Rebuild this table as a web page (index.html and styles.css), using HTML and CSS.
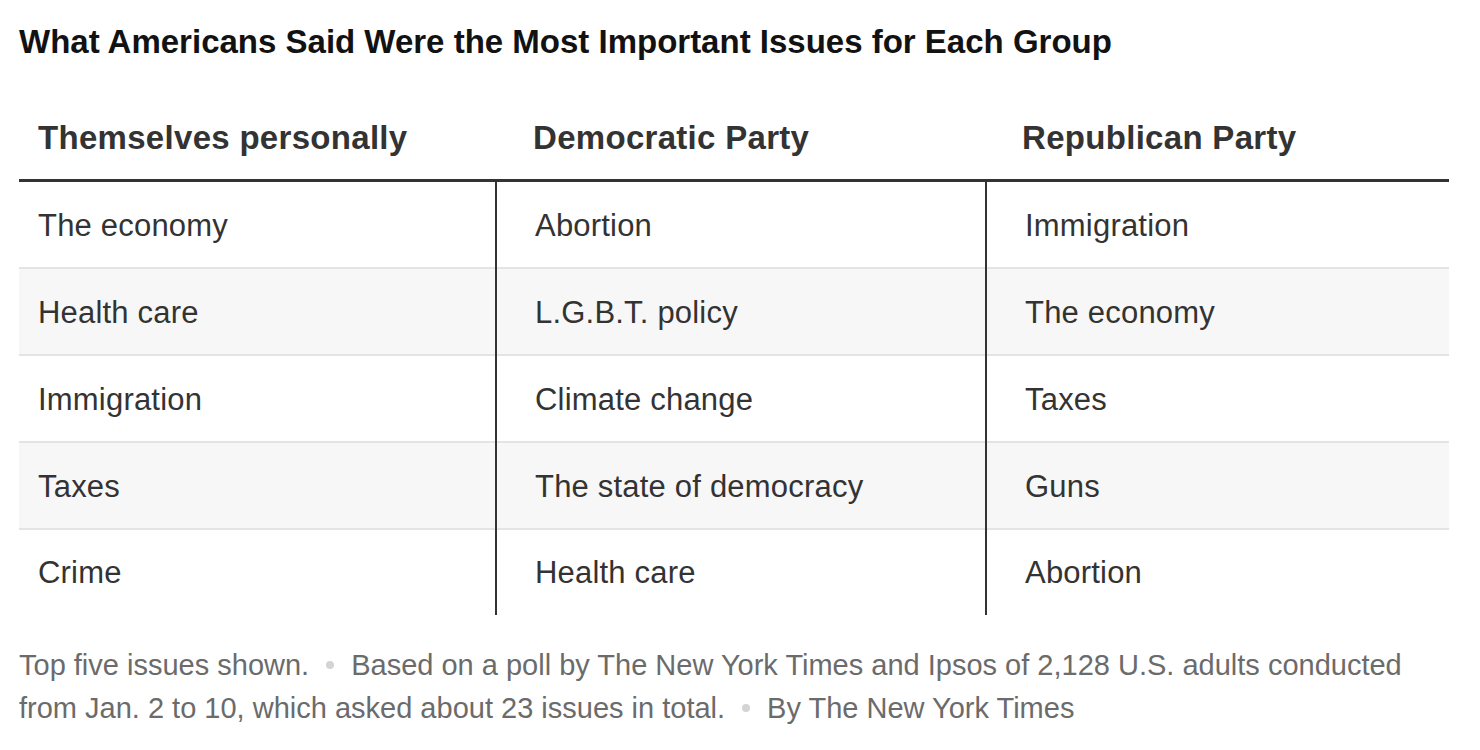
FILE: index.html
```html
<!DOCTYPE html>
<html lang="en">
<head>
<meta charset="utf-8">
<title>What Americans Said Were the Most Important Issues for Each Group</title>
<link rel="stylesheet" href="styles.css">
</head>
<body>
<div class="graphic">
  <h1 class="title">What Americans Said Were the Most Important Issues for Each Group</h1>
  <div class="table">
    <div class="thead">
      <div class="th c1">Themselves personally</div>
      <div class="th c2">Democratic Party</div>
      <div class="th c3">Republican Party</div>
    </div>
    <div class="tbody">
      <div class="row">
        <div class="td c1">The economy</div>
        <div class="td c2">Abortion</div>
        <div class="td c3">Immigration</div>
      </div>
      <div class="row alt">
        <div class="td c1">Health care</div>
        <div class="td c2">L.G.B.T. policy</div>
        <div class="td c3">The economy</div>
      </div>
      <div class="row">
        <div class="td c1">Immigration</div>
        <div class="td c2">Climate change</div>
        <div class="td c3">Taxes</div>
      </div>
      <div class="row alt">
        <div class="td c1">Taxes</div>
        <div class="td c2">The state of democracy</div>
        <div class="td c3">Guns</div>
      </div>
      <div class="row last">
        <div class="td c1">Crime</div>
        <div class="td c2">Health care</div>
        <div class="td c3">Abortion</div>
      </div>
    </div>
  </div>
  <p class="notes">Top five issues shown.<span class="dot"></span>Based on a poll by The New York Times and Ipsos of 2,128 U.S. adults conducted from Jan. 2 to 10, which asked about 23 issues in total.<span class="dot"></span>By The New York Times</p>
</div>
</body>
</html>
```
FILE: styles.css
```css
html, body {
  margin: 0;
  padding: 0;
  background: #ffffff;
}

.graphic {
  width: 1430px;
  padding: 0 0 0 19px;
  font-family: "Liberation Sans", Arial, sans-serif;
}

.title {
  margin: 0;
  padding-top: 23px;
  font-size: 33px;
  line-height: 38px;
  font-weight: 700;
  color: #121212;
  letter-spacing: 0;
}

.table {
  margin-top: 42px;
}

.thead,
.row {
  display: grid;
  grid-template-columns: 476px 490px 464px;
}

.thead {
  height: 79px;
  border-bottom: 3px solid #333333;
  box-sizing: border-box;
  align-items: start;
}

.th {
  font-size: 33px;
  line-height: 38px;
  font-weight: 700;
  color: #333333;
  padding-top: 16px;
  letter-spacing: 0.3px;
}

.th.c1 { padding-left: 19px; }
.th.c2 { padding-left: 38px; }
.th.c3 { padding-left: 37px; }

.row {
  height: 87px;
  box-sizing: border-box;
  border-bottom: 2px solid #e4e4e4;
}

.row.alt {
  background: #f7f7f7;
}

.row.last {
  border-bottom: none;
  height: 85px;
}

.td {
  display: flex;
  align-items: center;
  font-size: 31px;
  color: #333333;
  letter-spacing: 0.2px;
  box-sizing: border-box;
  margin-bottom: -2px;
}

.row.last .td {
  margin-bottom: 0;
}

.td.c1 { padding-left: 19px; }
.td.c2 { padding-left: 38px; border-left: 2px solid #333333; }
.td.c3 { padding-left: 38px; border-left: 2px solid #333333; }

.notes {
  margin: 29px 0 0 0;
  font-size: 29px;
  line-height: 43px;
  color: #6b6b6b;
  width: 1410px;
}

.dot {
  display: inline-block;
  width: 8px;
  height: 8px;
  border-radius: 50%;
  background: #d4d4d4;
  margin: 0 17px 0 17px;
  vertical-align: 6px;
}
```
